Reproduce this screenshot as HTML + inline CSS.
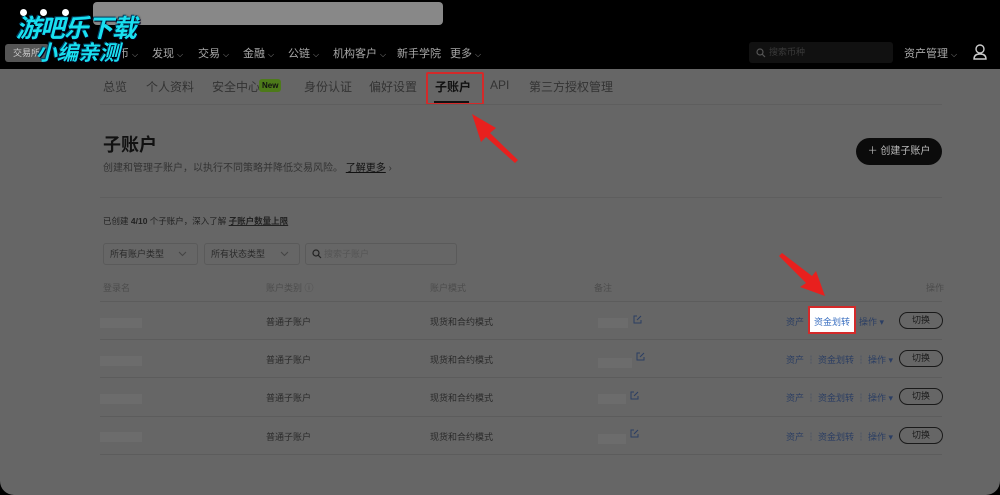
<!DOCTYPE html>
<html><head><meta charset="utf-8"><style>
*{margin:0;padding:0;box-sizing:border-box}
body{width:1000px;height:495px;background:#000;font-family:"Liberation Sans","Noto Sans CJK SC",sans-serif;overflow:hidden;position:relative}
.a{position:absolute;white-space:nowrap}
#page{position:absolute;left:0;top:69px;width:1000px;height:426px;background:#666;border-radius:0 0 14px 14px}
.nav{color:#a8a8a8;font-size:11px;top:45px}
.nav i{font-style:normal;font-size:8px;color:#888;margin-left:3px}
.tab{color:#333;font-size:12px;top:78px}
.hd{color:#4c4c4c;font-size:9px;top:281px}
.cell{color:#2a2a2a;font-size:9px}
.blur{background:#6c6c6c;width:42px;height:10px}
.sep{left:100px;width:842px;height:1px;background:#5c5c5c}
.lnk{color:#2b3e63;font-size:9px}
.btn{border:1px solid #1a1a1a;border-radius:10px;width:44px;height:17px;font-size:9px;color:#1a1a1a;text-align:center;line-height:15px}
.sel{border:1px solid #5a5a5a;border-radius:3px;height:22px;top:243px;font-size:9px;color:#2a2a2a;line-height:20px;padding-left:6px}
.ed{width:9px;height:9px}
</style></head><body>
<div class="a" style="left:93px;top:2px;width:350px;height:23px;background:#888;border-radius:4px"></div>
<div class="a" style="left:5px;top:44px;width:44px;height:18px;background:#555;border-radius:3px;color:#ccc;font-size:9px;line-height:18px;padding-left:8px">交易所</div>
<div class="a nav" style="left:118px">币<i>⌵</i></div>
<div class="a nav" style="left:152px">发现<i>⌵</i></div>
<div class="a nav" style="left:198px">交易<i>⌵</i></div>
<div class="a nav" style="left:243px">金融<i>⌵</i></div>
<div class="a nav" style="left:288px">公链<i>⌵</i></div>
<div class="a nav" style="left:333px">机构客户<i>⌵</i></div>
<div class="a nav" style="left:397px">新手学院</div>
<div class="a nav" style="left:450px">更多<i>⌵</i></div>
<div class="a" style="left:749px;top:42px;width:144px;height:21px;background:#111;border-radius:3px;color:#3a3a3a;font-size:9px;line-height:21px;padding-left:20px">搜索币种</div>
<svg class="a" style="left:756px;top:48px" width="10" height="10"><circle cx="4" cy="4" r="3" fill="none" stroke="#555" stroke-width="1.2"/><path d="M6 6l3 3" stroke="#555" stroke-width="1.2"/></svg>
<div class="a nav" style="left:904px">资产管理<i>⌵</i></div>
<svg class="a" style="left:972px;top:43px" width="16" height="18" viewBox="0 0 16 18"><circle cx="8" cy="6" r="4" fill="none" stroke="#ccc" stroke-width="1.4"/><path d="M2 16c0-4 3-5 6-5s6 1 6 5z" fill="none" stroke="#ccc" stroke-width="1.4"/></svg>
<!-- watermark -->
<div class="a" style="left:16px;top:9px;font-size:25px;font-weight:bold;font-style:italic;color:#19e0f0;text-shadow:1px 1px 0 #002,-1px -1px 0 #046,0 0 2px #000;letter-spacing:-1px">游吧乐下载</div>
<div class="a" style="left:36px;top:37px;font-size:21px;font-weight:bold;font-style:italic;color:#19e0f0;text-shadow:1px 1px 0 #002,-1px -1px 0 #046">小编亲测</div>
<div class="a" style="left:20px;top:9px;width:7px;height:7px;border-radius:50%;background:#fff"></div>
<div class="a" style="left:40px;top:9px;width:7px;height:7px;border-radius:50%;background:#fff"></div>
<div class="a" style="left:62px;top:9px;width:7px;height:7px;border-radius:50%;background:#fff"></div>

<div id="page"></div>
<div class="a tab" style="left:103px">总览</div>
<div class="a tab" style="left:146px">个人资料</div>
<div class="a tab" style="left:212px">安全中心</div>
<div class="a" style="left:259px;top:79px;background:#4d7a1a;color:#111;font-size:8px;font-weight:bold;padding:1px 3px;border-radius:3px;line-height:11px">New</div>
<div class="a tab" style="left:304px">身份认证</div>
<div class="a tab" style="left:369px">偏好设置</div>
<div class="a tab" style="left:435px;color:#111;font-weight:bold">子账户</div>
<div class="a" style="left:434px;top:101px;width:35px;height:2px;background:#111"></div>
<div class="a" style="left:426px;top:72px;width:58px;height:33px;border:2px solid #d42a2a;border-radius:2px"></div>
<div class="a tab" style="left:490px">API</div>
<div class="a tab" style="left:529px">第三方授权管理</div>
<div class="a" style="left:100px;top:104px;width:842px;height:1px;background:#5e5e5e"></div>
<!-- arrows -->
<svg class="a" style="left:470px;top:112px" width="50" height="52"><polygon points="2,2 26,16 20,21 48,48 45,51 16,25 11,30" fill="#e8201e"/></svg>
<svg class="a" style="left:778px;top:252px" width="50" height="46"><polygon points="1,4 4,1 34,24 38,19 47,44 22,35 28,31" fill="#e8201e"/></svg>

<div class="a" style="left:103px;top:131px;font-size:18px;font-weight:bold;color:#111">子账户</div>
<div class="a" style="left:103px;top:159px;font-size:10px;color:#333">创建和管理子账户，以执行不同策略并降低交易风险。 <span style="color:#111;text-decoration:underline">了解更多</span> ›</div>
<div class="a" style="left:856px;top:138px;width:86px;height:27px;background:#0b0b0b;border-radius:14px;color:#bbb;font-size:10px;line-height:27px;text-align:center">＋ 创建子账户</div>
<div class="a" style="left:100px;top:197px;width:842px;height:1px;background:#5e5e5e"></div>
<div class="a" style="left:103px;top:215px;font-size:8.5px;color:#222">已创建 <b>4/10</b> 个子账户，深入了解 <span style="text-decoration:underline;font-weight:bold">子账户数量上限</span></div>
<div class="a sel" style="left:103px;width:95px">所有账户类型</div>
<svg class="a" style="left:178px;top:251px" width="9" height="6"><path d="M1 1l3.5 3.5L8 1" fill="none" stroke="#444"/></svg>
<div class="a sel" style="left:204px;width:96px">所有状态类型</div>
<svg class="a" style="left:280px;top:251px" width="9" height="6"><path d="M1 1l3.5 3.5L8 1" fill="none" stroke="#444"/></svg>
<div class="a sel" style="left:305px;width:152px;color:#555;padding-left:18px">搜索子账户</div>
<svg class="a" style="left:312px;top:249px" width="10" height="10"><circle cx="4" cy="4" r="3" fill="none" stroke="#222" stroke-width="1.2"/><path d="M6 6l3 3" stroke="#222" stroke-width="1.2"/></svg>

<div class="a hd" style="left:103px">登录名</div>
<div class="a hd" style="left:266px">账户类别 ⓘ</div>
<div class="a hd" style="left:430px">账户模式</div>
<div class="a hd" style="left:594px">备注</div>
<div class="a hd" style="left:926px">操作</div>
<div class="a sep" style="top:301px"></div>
<div class="a sep" style="top:339px"></div>
<div class="a sep" style="top:377px"></div>
<div class="a sep" style="top:416px"></div>
<div class="a sep" style="top:454px"></div>

<!-- rows -->
<div class="a blur" style="left:100px;top:318px"></div>
<div class="a cell" style="left:266px;top:315px">普通子账户</div>
<div class="a cell" style="left:430px;top:315px">现货和合约模式</div>
<div class="a blur" style="left:598px;top:318px;width:30px"></div>
<svg class="a ed" style="left:633px;top:315px" viewBox="0 0 9 9"><path d="M4 1H1v7h7V5M4 5l4-4" fill="none" stroke="#2b3e63"/></svg>
<div class="a lnk" style="left:786px;top:315px">资产</div>
<div class="a" style="left:808px;top:306px;width:48px;height:28px;background:#fff;border:2px solid #d42a2a"></div>
<div class="a lnk" style="left:814px;top:315px;color:#3a6fc0">资金划转</div>
<div class="a lnk" style="left:859px;top:315px">操作 ▾</div>
<div class="a btn" style="left:899px;top:312px">切换</div>

<div class="a blur" style="left:100px;top:356px"></div>
<div class="a cell" style="left:266px;top:353px">普通子账户</div>
<div class="a cell" style="left:430px;top:353px">现货和合约模式</div>
<div class="a blur" style="left:598px;top:358px;width:34px"></div>
<svg class="a ed" style="left:636px;top:352px" viewBox="0 0 9 9"><path d="M4 1H1v7h7V5M4 5l4-4" fill="none" stroke="#2b3e63"/></svg>
<div class="a lnk" style="left:786px;top:353px">资产 ┆ 资金划转 ┆ 操作 ▾</div>
<div class="a btn" style="left:899px;top:350px">切换</div>

<div class="a blur" style="left:100px;top:394px"></div>
<div class="a cell" style="left:266px;top:391px">普通子账户</div>
<div class="a cell" style="left:430px;top:391px">现货和合约模式</div>
<div class="a blur" style="left:598px;top:394px;width:28px"></div>
<svg class="a ed" style="left:630px;top:391px" viewBox="0 0 9 9"><path d="M4 1H1v7h7V5M4 5l4-4" fill="none" stroke="#2b3e63"/></svg>
<div class="a lnk" style="left:786px;top:391px">资产 ┆ 资金划转 ┆ 操作 ▾</div>
<div class="a btn" style="left:899px;top:388px">切换</div>

<div class="a blur" style="left:100px;top:432px"></div>
<div class="a cell" style="left:266px;top:430px">普通子账户</div>
<div class="a cell" style="left:430px;top:430px">现货和合约模式</div>
<div class="a blur" style="left:598px;top:434px;width:28px"></div>
<svg class="a ed" style="left:630px;top:429px" viewBox="0 0 9 9"><path d="M4 1H1v7h7V5M4 5l4-4" fill="none" stroke="#2b3e63"/></svg>
<div class="a lnk" style="left:786px;top:430px">资产 ┆ 资金划转 ┆ 操作 ▾</div>
<div class="a btn" style="left:899px;top:427px">切换</div>
</body></html>
